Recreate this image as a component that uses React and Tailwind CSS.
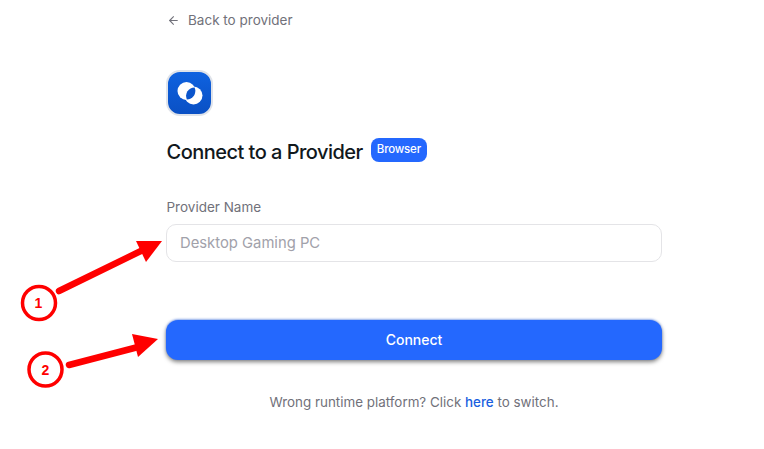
import React from "react";
import { ArrowLeft } from "lucide-react";

const Annotations = () => (
  <svg className="absolute left-0 top-0 pointer-events-none" width="764" height="449" viewBox="0 0 764 449">
    {/* arrow 1 */}
    <line x1="59" y1="291" x2="145" y2="249" stroke="#ff0000" strokeWidth="6.5" strokeLinecap="round" />
    <polygon points="162,241 136,241 146,262" fill="#ff0000" />
    <circle cx="39" cy="303" r="16.5" fill="#fff" stroke="#ff0000" strokeWidth="3.5" />
    <text x="38.5" y="308" textAnchor="middle" fill="#ff0000" fontSize="14" fontWeight="700" fontFamily="'Liberation Sans', sans-serif">1</text>
    {/* arrow 2 */}
    <line x1="69" y1="365" x2="142" y2="346" stroke="#ff0000" strokeWidth="6.5" strokeLinecap="round" />
    <polygon points="158,339 132,334 138,357" fill="#ff0000" />
    <circle cx="45.5" cy="369.5" r="16.5" fill="#fff" stroke="#ff0000" strokeWidth="3.5" />
    <text x="45.5" y="374.5" textAnchor="middle" fill="#ff0000" fontSize="14" fontWeight="700" fontFamily="'Liberation Sans', sans-serif">2</text>
  </svg>
);

const Logo = () => (
  <div className="w-[47px] h-[46px] rounded-[14px] bg-gradient-to-b from-[#0f62e0] to-[#0a50c4] border-2 border-[#dfe3ea] flex items-center justify-center">
    <svg width="28" height="28" viewBox="0 0 28 28">
      <circle cx="10.5" cy="12" r="9" fill="#fff" />
      <circle cx="17.5" cy="16.5" r="9" fill="#fff" />
      <path d="M18.6 8.6A8.4 8.4 0 0 0 10.8 20.4A8.4 8.4 0 0 0 18.6 8.6Z" fill="#0b55cc" />
    </svg>
  </div>
);

const App = () => {
  return (
    <div className="relative w-[764px] h-[449px] overflow-hidden bg-white font-['Inter',sans-serif]">
      <div className="w-[496px] ml-[166px] pt-[12px] flex flex-col">
        <div className="flex items-center gap-[8px] h-[17px] pl-[1px] text-[13.5px] text-[#71717a]">
          <ArrowLeft size={13} strokeWidth={2} />
          <span>Back to provider</span>
        </div>

        <div className="mt-[41px]">
          <Logo />
        </div>

        <div className="mt-[21px] flex items-center gap-[8px] pl-[0.5px]">
          <h1 className="text-[20px] leading-[30px] font-medium tracking-[-0.52px] text-[#11181c]">Connect to a Provider</h1>
          <span className="h-6 mb-[5px] px-[6px] flex items-center rounded-lg bg-[#2468fe] text-white text-[11.5px] tracking-[-0.2px] font-medium">Browser</span>
        </div>

        <label className="mt-[30px] text-[13.5px] leading-[20px] pl-[0.5px] text-[#71717a]">Provider Name</label>
        <input
          readOnly
          placeholder="Desktop Gaming PC"
          className="mt-[7px] h-[38px] w-full rounded-[10px] border border-[#e4e4e7] px-[13px] text-[14.8px] outline-none placeholder:text-[#a1a1aa]"
        />

        <button className="mt-[58px] h-[40px] w-full rounded-xl bg-[#2468fe] text-white text-sm font-medium shadow-[0_2px_4px_rgba(0,0,0,0.5),0_-1px_2px_rgba(36,104,254,0.45)]">
          Connect
        </button>

        <p className="mt-[32px] text-center text-[13.4px] leading-[20px] text-[#71717a]">
          Wrong runtime platform? Click <span className="font-medium text-[#1a5fe0]">here</span> to switch.
        </p>
      </div>
      <Annotations />
    </div>
  );
};

export default App;
